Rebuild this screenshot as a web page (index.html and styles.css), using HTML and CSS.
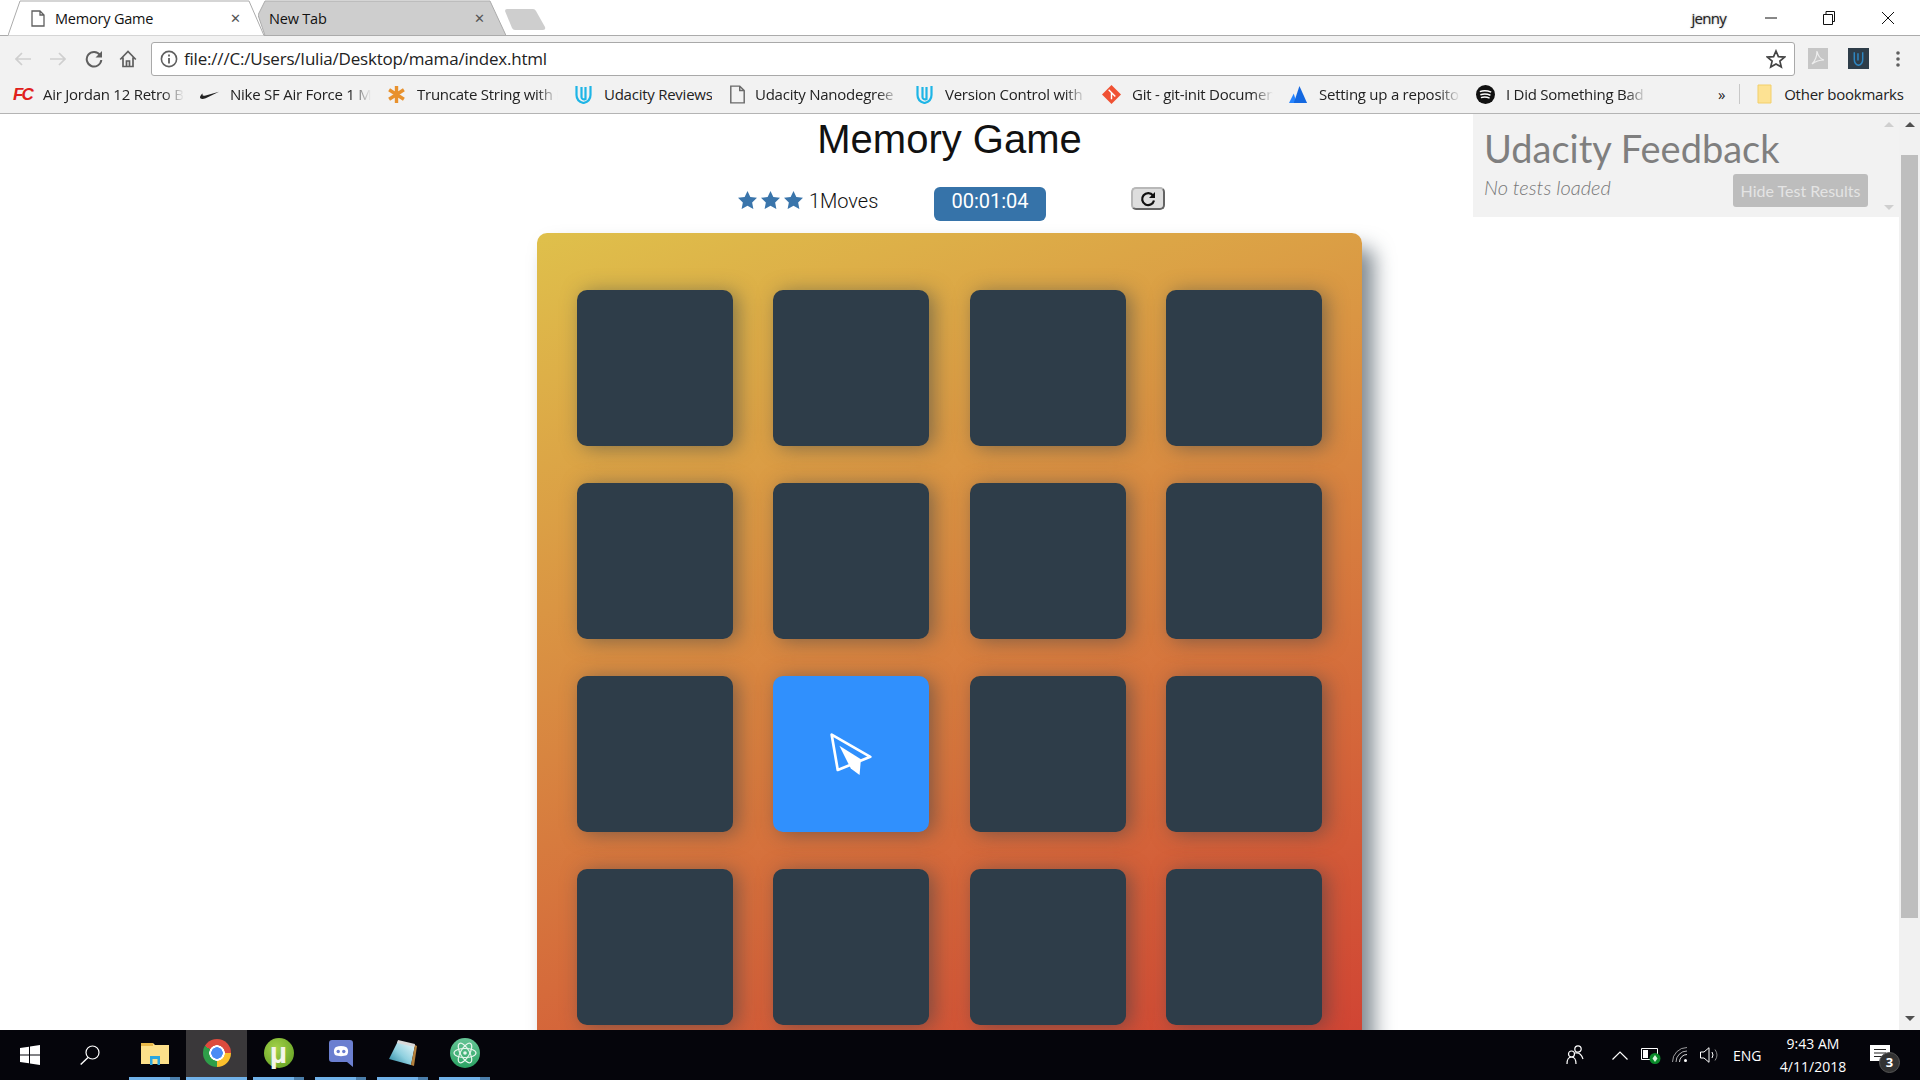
FILE: index.html
```html
<!DOCTYPE html>
<html lang="en">
<head>
    <meta charset="UTF-8">
    <title>Memory Game</title>
    <link rel="stylesheet" href="styles.css">
</head>
<body>

    <!-- Browser chrome -->
    <header class="browser">
        <div class="tabstrip">
            <div class="tab tab-active">
                <svg class="tab-shape" viewBox="0 0 256 36" preserveAspectRatio="none"><path d="M0 35.5 L12 1 H241 L256 35.5" fill="#fff" stroke="#ababab"/></svg>
                <svg class="tab-doc" viewBox="0 0 14 17"><path d="M1 1 H9 L13 5 V16 H1 Z M9 1 V5 H13" fill="none" stroke="#5f5f5f" stroke-width="1.3"/></svg>
                <span class="tab-title">Memory Game</span>
                <span class="tab-close">✕</span>
            </div>
            <div class="tab tab-idle">
                <svg class="tab-shape" viewBox="0 0 248 36" preserveAspectRatio="none"><path d="M7 35.5 L0 15 L7 1 H232 L248 35.5 Z" fill="#cecece" stroke="#ababab"/></svg>
                <span class="tab-title">New Tab</span>
                <span class="tab-close">✕</span>
            </div>
            <svg class="new-tab" viewBox="0 0 42 21"><path d="M1 2 Q1 0 3 0 H29 Q31 0 32 2 L41 18 Q42 21 39 21 H11 Q9 21 8 19 Z" fill="#cecece"/></svg>
            <div class="window-controls">
                <span class="profile">jenny</span>
                <svg class="win-min" viewBox="0 0 12 12"><path d="M0 6 H12" stroke="#111" fill="none"/></svg>
                <svg class="win-restore" viewBox="0 0 12 14"><path d="M.5 3.5 H9.5 V13.5 H.5 Z M3 3 V.5 H11.5 V10.5 H10" stroke="#111" fill="none"/></svg>
                <svg class="win-close" viewBox="0 0 12 12"><path d="M0 0 L12 12 M12 0 L0 12" stroke="#111" fill="none"/></svg>
            </div>
        </div>

        <div class="toolbar">
            <svg class="nav-icon nav-back" viewBox="0 0 16 14"><path d="M16 7 H2 M7 1 L1 7 L7 13" fill="none" stroke="#cfcfcf" stroke-width="1.7"/></svg>
            <svg class="nav-icon nav-forward" viewBox="0 0 16 14"><path d="M0 7 H14 M9 1 L15 7 L9 13" fill="none" stroke="#cfcfcf" stroke-width="1.7"/></svg>
            <svg class="nav-icon nav-reload" viewBox="0 0 18 18"><path d="M15 5 A7.3 7.3 0 1 0 16.3 10" fill="none" stroke="#5f5f5f" stroke-width="2"/><path d="M17 1 V7.5 H10.5 Z" fill="#5f5f5f"/></svg>
            <svg class="nav-icon nav-home" viewBox="0 0 18 18"><path d="M1.2 9.5 L9 1.5 L16.8 9.5 M4 7.5 V16.5 H14 V7.5 M7.5 16.5 V11 H10.5 V16.5" fill="none" stroke="#5f5f5f" stroke-width="1.7"/></svg>
            <div class="omnibox">
                <svg class="info-icon" viewBox="0 0 18 18"><circle cx="9" cy="9" r="7.6" fill="none" stroke="#5f5f5f" stroke-width="1.6"/><path d="M9 8 V13.5 M9 4.5 V6.5" stroke="#5f5f5f" stroke-width="1.8"/></svg>
                <span class="url">file:///C:/Users/Iulia/Desktop/mama/index.html</span>
                <svg class="bookmark-star" viewBox="0 0 20 20"><path d="M10 2 L12.4 7.6 L18.5 8.1 L13.9 12.1 L15.3 18 L10 14.9 L4.7 18 L6.1 12.1 L1.5 8.1 L7.6 7.6 Z" fill="none" stroke="#444" stroke-width="1.7"/></svg>
            </div>
            <div class="ext ext-pdf"><svg viewBox="0 0 20 20"><path d="M4 16 C8 12 9 7 9 3 C10 8 12 11 16 12 C12 12 8 13 4 16" fill="none" stroke="#eee" stroke-width="1.2"/></svg></div>
            <div class="ext ext-udacity"><svg viewBox="0 0 20 20"><path d="M6 4 V11 C6 14 8 16 10 16.5 C12 16 14 14 14 11 V4 M9.5 5 V12" fill="none" stroke="#2e86c1" stroke-width="1.4"/></svg></div>
            <svg class="chrome-menu" viewBox="0 0 4 16"><circle cx="2" cy="2" r="1.8"/><circle cx="2" cy="8" r="1.8"/><circle cx="2" cy="14" r="1.8"/></svg>
        </div>

        <div class="bookmarks">
            <div class="bm">
                <span class="bm-icon bm-fc">FC</span>
                <span class="bm-text">Air Jordan 12 Retro Black</span>
            </div>
            <div class="bm">
                <svg class="bm-icon" viewBox="0 0 20 10"><path d="M0 8 C0 10 3 10 6 9 L20 2 L6 6 C3 7 2 6 3 4 C1 5 0 7 0 8 Z" fill="#222"/></svg>
                <span class="bm-text">Nike SF Air Force 1 Mid</span>
            </div>
            <div class="bm">
                <svg class="bm-icon" viewBox="0 0 18 18"><path d="M9 1 V17 M2 4.5 L16 13.5 M16 4.5 L2 13.5" stroke="#e8912d" stroke-width="3.2" fill="none"/></svg>
                <span class="bm-text">Truncate String with Ellipsis</span>
            </div>
            <div class="bm">
                <svg class="bm-icon" viewBox="1.5 1 17 19"><path d="M3 2 V11 C3 15 6 18 10 19 C14 18 17 15 17 11 V2 M8 3 V13 C8 15 10 16 12 15 V3" fill="none" stroke="#1eb5e6" stroke-width="2.2"/></svg>
                <span class="bm-text bm-full">Udacity Reviews</span>
            </div>
            <div class="bm">
                <svg class="bm-icon bm-doc" viewBox="0 0 14 17"><path d="M1 1 H9 L13 5 V16 H1 Z M9 1 V5 H13" fill="none" stroke="#6a6a6a" stroke-width="1.3"/></svg>
                <span class="bm-text bm-nano">Udacity Nanodegree</span>
            </div>
            <div class="bm">
                <svg class="bm-icon" viewBox="1.5 1 17 19"><path d="M3 2 V11 C3 15 6 18 10 19 C14 18 17 15 17 11 V2 M8 3 V13 C8 15 10 16 12 15 V3" fill="none" stroke="#1eb5e6" stroke-width="2.2"/></svg>
                <span class="bm-text">Version Control with Git</span>
            </div>
            <div class="bm">
                <svg class="bm-icon" viewBox="0 0 20 20"><path d="M10 0 L20 10 L10 20 L0 10 Z" fill="#f05133"/><path d="M7 5 L14 12 M10 8 V15" stroke="#fff" stroke-width="1.5" fill="none"/></svg>
                <span class="bm-text">Git - git-init Documentation</span>
            </div>
            <div class="bm">
                <svg class="bm-icon" viewBox="0 0 20 20"><path d="M0 19 L5 9 L8 19 Z" fill="#2684ff"/><path d="M5 19 L11 1 L19 19 Z" fill="#1468e0"/></svg>
                <span class="bm-text">Setting up a repository</span>
            </div>
            <div class="bm">
                <svg class="bm-icon" viewBox="0 0 20 20"><circle cx="10" cy="10" r="10" fill="#111"/><path d="M4 7 C8 5.5 12 5.8 16 7.5 M4.6 10.3 C8 9 12 9.3 15.2 10.8 M5.2 13.3 C8 12.3 11.5 12.5 14.3 13.8" fill="none" stroke="#fff" stroke-width="1.5"/></svg>
                <span class="bm-text">I Did Something Bad</span>
            </div>
            <span class="bm-more">»</span>
            <span class="bm-sep"></span>
            <svg class="bm-folder" viewBox="0 0 15 20"><path d="M1 1 H14 V19 H1 Z" fill="#fde293" stroke="#f2cf6b"/></svg>
            <span class="bm-other">Other bookmarks</span>
        </div>
    </header>

    <div class="viewport">
        <main class="page">
            <h1 class="game-title">Memory Game</h1>

            <section class="score-panel">
                <ul class="stars">
                    <li><svg viewBox="0 0 20 19"><path d="M10 0 L13 6.3 L20 7.2 L14.9 12 L16.2 19 L10 15.6 L3.8 19 L5.1 12 L0 7.2 L7 6.3 Z"/></svg></li>
                    <li><svg viewBox="0 0 20 19"><path d="M10 0 L13 6.3 L20 7.2 L14.9 12 L16.2 19 L10 15.6 L3.8 19 L5.1 12 L0 7.2 L7 6.3 Z"/></svg></li>
                    <li><svg viewBox="0 0 20 19"><path d="M10 0 L13 6.3 L20 7.2 L14.9 12 L16.2 19 L10 15.6 L3.8 19 L5.1 12 L0 7.2 L7 6.3 Z"/></svg></li>
                </ul>
                <span class="moves">1 Moves</span>
                <span class="timer">00:01:04</span>
                <button class="restart">
                    <svg viewBox="0 0 16 16"><path d="M13 4.5 A6 6 0 1 0 14 9.5" fill="none" stroke="#111" stroke-width="2.2"/><path d="M15 1 V7 H9 Z" fill="#111"/></svg>
                </button>
            </section>

            <section class="deck">
                <div class="card"></div>
                <div class="card"></div>
                <div class="card"></div>
                <div class="card"></div>
                <div class="card"></div>
                <div class="card"></div>
                <div class="card"></div>
                <div class="card"></div>
                <div class="card"></div>
                <div class="card card-open">
                    <svg viewBox="0 0 125 125"><path d="M5 5 L120 71 L23 110 Z" fill="none" stroke="#fff" stroke-width="8" stroke-linejoin="round"/><path d="M28 38 L92 78 L88 125 L62 106 Z" fill="#fff"/></svg>
                </div>
                <div class="card"></div>
                <div class="card"></div>
                <div class="card"></div>
                <div class="card"></div>
                <div class="card"></div>
                <div class="card"></div>
            </section>

            <!-- Udacity test widget sits over the page -->
            <aside class="feedback">
                <div class="feedback-body">
                    <h2 class="feedback-title">Udacity Feedback</h2>
                    <div class="feedback-row">
                        <em class="feedback-status">No tests loaded</em>
                        <span class="feedback-button">Hide Test Results</span>
                    </div>
                </div>
                <div class="feedback-scroll">
                    <span class="arrow-up arrow-light"></span>
                    <span class="arrow-down arrow-light"></span>
                </div>
            </aside>
        </main>

        <div class="scrollbar">
            <span class="arrow-up"></span>
            <div class="scroll-thumb"></div>
            <span class="arrow-down"></span>
        </div>
    </div>

    <!-- Windows taskbar -->
    <footer class="taskbar">
        <svg class="start" viewBox="0 0 20 20"><path d="M0 3 L9 1.7 V9.5 H0 Z M10 1.5 L20 0 V9.5 H10 Z M0 10.5 H9 V18.3 L0 17 Z M10 10.5 H20 V20 L10 18.5 Z" fill="#fff"/></svg>
        <svg class="search" viewBox="0 0 20 20"><circle cx="12.5" cy="7.5" r="6.5" fill="none" stroke="#fff" stroke-width="1.2"/><path d="M8 12.5 L.7 19.5" stroke="#fff" stroke-width="1.4"/></svg>

        <div class="task task-stacked">
            <svg class="task-icon task-folder" viewBox="0 0 28 23"><path d="M0 1 H12 L14 3 H28 V22 H0 Z" fill="#fde08a"/><path d="M0 1 H12 V4 H0 Z" fill="#e9b949"/><path d="M9 23 V14 H19 V23 H16.5 V17 H11.5 V23 Z" fill="#2ca7e0"/></svg>
        </div>
        <div class="task task-current">
            <span class="chrome-logo"></span>
        </div>
        <div class="task task-stacked">
            <span class="torrent-logo">µ</span>
        </div>
        <div class="task task-stacked">
            <svg class="task-icon task-discord" viewBox="0 0 24 27"><path d="M3 0 H21 Q24 0 24 3 V27 L18 22 H3 Q0 22 0 19 V3 Q0 0 3 0 Z" fill="#6b7fd0"/><path d="M6 15 C4 12 5 8 7 7 C10 5.8 14 5.8 17 7 C19 8 20 12 18 15 C15 16.5 9 16.5 6 15 Z" fill="#fff"/><circle cx="9.2" cy="11.5" r="1.7" fill="#6b7fd0"/><circle cx="14.8" cy="11.5" r="1.7" fill="#6b7fd0"/></svg>
        </div>
        <div class="task task-stacked">
            <svg class="task-icon task-notes" viewBox="0 0 28 27">
                <defs><linearGradient id="note-page" x1="0" y1="1" x2="1" y2="0"><stop offset="0" stop-color="#1f7f9c"/><stop offset=".45" stop-color="#8fd0df"/><stop offset="1" stop-color="#f2fbfd"/></linearGradient></defs>
                <path d="M9 1 L26 5 L22 25 L0 19 Z" fill="url(#note-page)"/>
                <path d="M9 0 L26 4 L25.5 7 L8 3 Z" fill="#d9d9d9"/>
                <path d="M26 5 L28 6 L25 26 L22 25 Z" fill="#b5813c"/>
            </svg>
        </div>
        <div class="task task-stacked">
            <svg class="task-icon task-atom" viewBox="0 0 30 30">
                <defs><linearGradient id="atom-bg" x1="0" y1="0" x2="0" y2="1"><stop offset="0" stop-color="#66c596"/><stop offset="1" stop-color="#2aa262"/></linearGradient></defs>
                <circle cx="15" cy="15" r="15" fill="url(#atom-bg)"/>
                <g fill="none" stroke="#e6f5ec" stroke-width="1.2"><ellipse cx="15" cy="15" rx="11" ry="4.5"/><ellipse cx="15" cy="15" rx="11" ry="4.5" transform="rotate(60 15 15)"/><ellipse cx="15" cy="15" rx="11" ry="4.5" transform="rotate(120 15 15)"/></g>
                <circle cx="15" cy="15" r="1.8" fill="#e6f5ec"/>
            </svg>
        </div>

        <div class="tray">
            <svg class="tray-people" viewBox="0 0 18 20"><g fill="none" stroke="#fff" stroke-width="1.2"><circle cx="12" cy="4" r="3.2"/><circle cx="5.5" cy="9" r="3"/><path d="M1 19 C1 14 3 12 5.5 12 C8 12 10 14 10 19 M9 8 C11 7.5 15 7.5 17 14"/></g></svg>
            <svg class="tray-caret" viewBox="0 0 16 9"><path d="M.5 8.5 L8 1 L15.5 8.5" fill="none" stroke="#fff" stroke-width="1.2"/></svg>
            <svg class="tray-battery" viewBox="0 0 20 18"><path d="M.5 2.5 H16.5 V13.5 H.5 Z" fill="none" stroke="#fff"/><path d="M2 4 H7 V12 H2 Z" fill="#fff"/><circle cx="14" cy="12.5" r="5.5" fill="#0a8a2a"/><path d="M14 9 L16.5 12.5 L14 16 L11.5 12.5 Z" fill="#d8f5df"/></svg>
            <svg class="tray-wifi" viewBox="0 0 16 16"><g fill="none" stroke="#fff"><path d="M.5 15 A14.5 14.5 0 0 1 15 .5" opacity=".6"/><path d="M4 15 A11 11 0 0 1 15 4" opacity=".7"/><path d="M7.5 15 A7.5 7.5 0 0 1 15 7.5" opacity=".85"/></g><circle cx="13.5" cy="13.5" r="1.5" fill="#fff"/></svg>
            <svg class="tray-volume" viewBox="0 0 20 16"><path d="M.5 5 H4 L9 .7 V15.3 L4 11 H.5 Z" fill="none" stroke="#fff"/><path d="M12 5 Q14 8 12 11" fill="none" stroke="#fff"/><path d="M15 2.5 Q19 8 15 13.5" fill="none" stroke="#888"/></svg>
            <span class="tray-lang">ENG</span>
            <div class="clock">
                <span>9:43 AM</span>
                <span>4/11/2018</span>
            </div>
            <div class="notify">
                <svg viewBox="0 0 20 18"><path d="M0 0 H20 V16 H0 Z" fill="#fff"/><path d="M4 4.5 H16 M4 8 H16 M4 11.5 H12" stroke="#222" stroke-width="1.2"/></svg>
                <span class="notify-badge">3</span>
            </div>
        </div>
    </footer>

</body>
</html>
```

FILE: styles.css
```css
* {
    box-sizing: border-box;
}

html, body {
    margin: 0;
    height: 100%;
}

body {
    height: 1080px;
    display: flex;
    flex-direction: column;
    overflow: hidden;
    background-color: #fff;
    font-family: "Open Sans", "Noto Sans", sans-serif;
    color: #111;
}

/* Browser chrome */
.browser {
    height: 114px;
    flex: none;
    background-color: #f2f2f2;
    border-bottom: 1px solid #b4b4b4;
}

.tabstrip {
    height: 36px;
    display: flex;
    align-items: flex-start;
    padding-left: 8px;
    background-color: #fff;
    border-bottom: 1px solid #ababab;
}

.tab {
    position: relative;
    height: 36px;
    display: flex;
    align-items: center;
    font-size: 14.5px;
    letter-spacing: -0.2px;
}

.tab-shape {
    position: absolute;
    left: 0;
    top: 0;
    width: 100%;
    height: 100%;
}

.tab-active {
    width: 256px;
    padding-left: 23px;
    z-index: 1;
}

.tab-idle {
    width: 248px;
    margin-left: -6px;
    padding-left: 11px;
}

.tab-doc {
    position: relative;
    width: 14px;
    height: 17px;
    margin-right: 10px;
}

.tab-title {
    position: relative;
    flex: 1;
    white-space: nowrap;
}

.tab-close {
    position: relative;
    width: 13px;
    margin-right: 21px;
    font-size: 13px;
    color: #555;
}

.tab-idle .tab-close {
    margin-right: 19px;
}

.new-tab {
    width: 42px;
    height: 21px;
    margin: 9px 0 0 -2px;
}

.window-controls {
    flex: 1;
    height: 35px;
    display: flex;
    align-items: center;
    justify-content: flex-end;
    padding-right: 26px;
}

.profile {
    margin-right: 39px;
    font-size: 15px;
    letter-spacing: -0.7px;
    color: #222;
    text-shadow: 0 0 2px #999;
}

.win-min {
    width: 12px;
    height: 12px;
    margin-right: 46px;
}

.win-restore {
    width: 12px;
    height: 14px;
    margin-right: 47px;
}

.win-close {
    width: 12px;
    height: 12px;
}

.toolbar {
    height: 39px;
    display: flex;
    align-items: center;
    padding: 6px 0 0 15px;
}

.nav-icon {
    flex: none;
    width: 16px;
    height: 14px;
}

.nav-forward {
    margin-left: 19px;
}

.nav-reload {
    width: 18px;
    height: 18px;
    margin-left: 19px;
}

.nav-home {
    width: 18px;
    height: 18px;
    margin-left: 16px;
}

.omnibox {
    width: 1644px;
    height: 34px;
    margin-left: 14px;
    display: flex;
    align-items: center;
    padding: 0 5px 0 8px;
    background-color: #fff;
    border: 1px solid #a9a9a9;
    border-radius: 3px;
}

.info-icon {
    width: 18px;
    height: 18px;
}

.url {
    flex: 1;
    margin-left: 6px;
    font-size: 17px;
    letter-spacing: -0.2px;
    color: #222;
}

.bookmark-star {
    width: 20px;
    height: 20px;
    margin-right: 3px;
}

.ext {
    width: 20px;
    height: 21px;
    margin-left: 13px;
}

.ext svg {
    display: block;
}

.ext-pdf {
    background-color: #c6c6c6;
}

.ext-udacity {
    width: 21px;
    margin-left: 20px;
    background-color: #2e3d49;
}

.chrome-menu {
    width: 4px;
    height: 16px;
    margin-left: 27px;
    fill: #5f5f5f;
}

.bookmarks {
    height: 38px;
    display: flex;
    align-items: center;
    padding-left: 13px;
    font-size: 15px;
    letter-spacing: -0.25px;
    color: #222;
}

.bm {
    display: flex;
    align-items: center;
    margin-right: 16px;
    white-space: nowrap;
}

.bm-icon {
    flex: none;
    width: 19px;
    height: 19px;
    margin-right: 11px;
}

.bm-fc {
    font-family: "Liberation Sans", sans-serif;
    font-size: 17px;
    font-weight: bold;
    font-style: italic;
    letter-spacing: -2px;
    line-height: 19px;
    color: #e0201c;
}

.bm-doc {
    margin-right: 8px;
}

.bm-text {
    width: 141px;
    overflow: hidden;
    -webkit-mask-image: linear-gradient(to right, #000 85%, transparent 100%);
    mask-image: linear-gradient(to right, #000 85%, transparent 100%);
}

.bm-full {
    width: 108px;
    -webkit-mask-image: none;
    mask-image: none;
}

.bm-nano {
    width: 144px;
}

.bm-more {
    margin-left: 55px;
    font-size: 15px;
}

.bm-sep {
    width: 1px;
    height: 20px;
    margin-left: 14px;
    background-color: #c8c8c8;
}

.bm-folder {
    width: 15px;
    height: 20px;
    margin-left: 17px;
}

.bm-other {
    margin-left: 12px;
    white-space: nowrap;
}

/* Page */
.viewport {
    flex: 1;
    min-height: 0;
    display: flex;
}

.page {
    position: relative;
    flex: 1;
    min-width: 0;
    display: flex;
    flex-direction: column;
    align-items: center;
    overflow: hidden;
}

.game-title {
    margin: 0;
    height: 61px;
    padding-top: 2px;
    font-family: "Liberation Sans", Arial, sans-serif;
    font-size: 40px;
    font-weight: 400;
    line-height: 46px;
    color: #111;
}

.score-panel {
    width: 427px;
    height: 71px;
    flex: none;
    display: flex;
    align-items: flex-start;
    margin-left: 4px;
    padding-top: 25px;
    font-family: Roboto, sans-serif;
}

.stars {
    display: flex;
    gap: 4px;
    margin: 4px 0 0;
    padding: 0;
    list-style: none;
}

.stars li {
    width: 19px;
    height: 18px;
}

.stars svg {
    display: block;
    fill: #3a75ab;
}

.moves {
    margin-left: 6px;
    width: 68px;
    font-size: 20px;
    font-weight: 300;
    line-height: 28px;
    word-spacing: -5px;
    white-space: nowrap;
    color: #111;
}

.timer {
    width: 112px;
    height: 34px;
    margin-left: 57px;
    border-radius: 6px;
    background-color: #3673a9;
    color: #fff;
    font-size: 20px;
    line-height: 28px;
    text-align: center;
}

.restart {
    width: 34px;
    height: 23px;
    margin-left: auto;
    padding: 0;
    display: flex;
    align-items: center;
    justify-content: center;
    background-color: #dedede;
    border: 2px outset #b8b8b8;
    border-radius: 5px;
}

.restart svg {
    width: 16px;
    height: 16px;
}

.deck {
    width: 825px;
    height: 840px;
    flex: none;
    display: grid;
    grid-template-columns: repeat(4, 156px);
    grid-auto-rows: 156px;
    column-gap: 40.25px;
    row-gap: 37px;
    padding: 57px 40px 0;
    border-radius: 10px;
    background: linear-gradient(160deg, #dfc04b 0%, #d04033 100%);
    box-shadow: 12px 15px 20px 0 rgba(46, 61, 73, 0.6);
}

.card {
    border-radius: 10px;
    background-color: #2e3d49;
    box-shadow: 5px 2px 20px 0 rgba(46, 61, 73, 0.5);
}

.card-open {
    display: flex;
    align-items: center;
    justify-content: center;
    background-color: #3090fd;
}

.card-open svg {
    width: 42px;
    height: 42px;
}

/* Feedback widget */
.feedback {
    position: absolute;
    top: 0;
    right: 0;
    width: 426px;
    height: 103px;
    display: flex;
    background-color: #f2f2f2;
}

.feedback-body {
    flex: 1;
    padding: 11px 10px 0 11px;
}

.feedback-title {
    margin: 0;
    font-family: Lato, sans-serif;
    font-size: 38px;
    font-weight: 400;
    line-height: 46px;
    color: #7f7f7f;
}

.feedback-row {
    display: flex;
    align-items: flex-start;
    justify-content: space-between;
    margin-top: 3px;
}

.feedback-status {
    margin-top: 1px;
    font-family: Lato, sans-serif;
    font-size: 20px;
    font-weight: 300;
    line-height: 24px;
    color: #777;
}

.feedback-button {
    width: 135px;
    height: 33px;
    border-radius: 3px;
    background-color: #bdbdbd;
    color: #e4e4e4;
    font-family: Lato, sans-serif;
    font-size: 16px;
    line-height: 33px;
    text-align: center;
}

.feedback-scroll {
    width: 21px;
    display: flex;
    flex-direction: column;
    justify-content: space-between;
    align-items: center;
    padding: 8px 0 7px;
}

.arrow-up,
.arrow-down {
    display: block;
    flex: none;
    width: 0;
    height: 0;
    border-left: 5px solid transparent;
    border-right: 5px solid transparent;
}

.arrow-up {
    border-bottom: 5px solid #505050;
}

.arrow-down {
    border-top: 5px solid #505050;
}

.arrow-up.arrow-light {
    border-bottom-color: #cfcfcf;
}

.arrow-down.arrow-light {
    border-top-color: #cfcfcf;
}

.scrollbar {
    width: 21px;
    flex: none;
    display: flex;
    flex-direction: column;
    align-items: center;
    padding-top: 8px;
    background-color: #f1f1f1;
}

.scroll-thumb {
    width: 17px;
    height: 763px;
    margin-top: 28px;
    background-color: #bebebe;
}

.scrollbar .arrow-down {
    margin-top: 98px;
}

/* Taskbar */
.taskbar {
    height: 50px;
    flex: none;
    display: flex;
    align-items: stretch;
    padding-left: 20px;
    background-color: #05050b;
    color: #fff;
}

.start {
    width: 20px;
    height: 20px;
    align-self: center;
}

.search {
    width: 20px;
    height: 20px;
    margin-left: 40px;
    align-self: center;
}

.task {
    width: 51px;
    margin-left: 11px;
    display: flex;
    align-items: center;
    justify-content: center;
    padding-bottom: 1px;
    border-bottom: 3px solid #70b1e8;
}

.task:nth-of-type(1) {
    margin-left: 29px;
}

.task-current {
    width: 61px;
    margin-left: 6px;
    background-color: #3a383a;
}

.task-current + .task {
    margin-left: 6px;
}

.task-stacked {
    border-image: linear-gradient(to right, #70b1e8 80%, #4b7eaa 80%) 1;
}

.task-icon {
    display: block;
}

.task-folder {
    width: 28px;
    height: 23px;
}

.task-discord {
    width: 24px;
    height: 27px;
}

.task-notes {
    width: 28px;
    height: 27px;
}

.task-atom {
    width: 30px;
    height: 30px;
}

.chrome-logo {
    width: 28px;
    height: 28px;
    border-radius: 50%;
    background:
        radial-gradient(circle, #4a8cf5 0 5.5px, #fff 6px 7.5px, transparent 8px),
        conic-gradient(from 0deg, #dd4b3e 0 90deg, #fbc02d 90deg 180deg, #2e9e49 180deg 300deg, #dd4b3e 300deg 360deg);
}

.torrent-logo {
    width: 30px;
    height: 30px;
    border-radius: 50%;
    background: radial-gradient(circle at 40% 35%, #a4d24a, #5b9a1e);
    color: #f4f4ea;
    font-family: "Liberation Sans", sans-serif;
    font-size: 30px;
    font-weight: bold;
    line-height: 29px;
    text-align: center;
}

.tray {
    flex: 1;
    display: flex;
    align-items: center;
    justify-content: flex-end;
    padding-right: 20px;
}

.tray-people {
    width: 18px;
    height: 20px;
    margin-right: 28px;
}

.tray-caret {
    width: 16px;
    height: 9px;
    margin-right: 13px;
}

.tray-battery {
    width: 20px;
    height: 18px;
    margin-right: 11px;
}

.tray-wifi {
    width: 16px;
    height: 16px;
    margin-right: 12px;
}

.tray-volume {
    width: 20px;
    height: 16px;
    margin-right: 13px;
}

.tray-lang {
    width: 30px;
    font-size: 14px;
}

.clock {
    width: 68px;
    margin-left: 16px;
    display: flex;
    flex-direction: column;
    align-items: center;
    gap: 3px;
    font-size: 14px;
    line-height: 20px;
    white-space: nowrap;
}

.notify {
    position: relative;
    width: 30px;
    height: 30px;
    margin-left: 23px;
}

.notify svg {
    display: block;
    width: 20px;
    height: 18px;
    margin-top: 5px;
}

.notify-badge {
    position: absolute;
    left: 9px;
    top: 12px;
    width: 21px;
    height: 21px;
    border-radius: 50%;
    border: 1px solid #555;
    background-color: #333;
    font-size: 13px;
    font-weight: bold;
    line-height: 19px;
    text-align: center;
}
```
